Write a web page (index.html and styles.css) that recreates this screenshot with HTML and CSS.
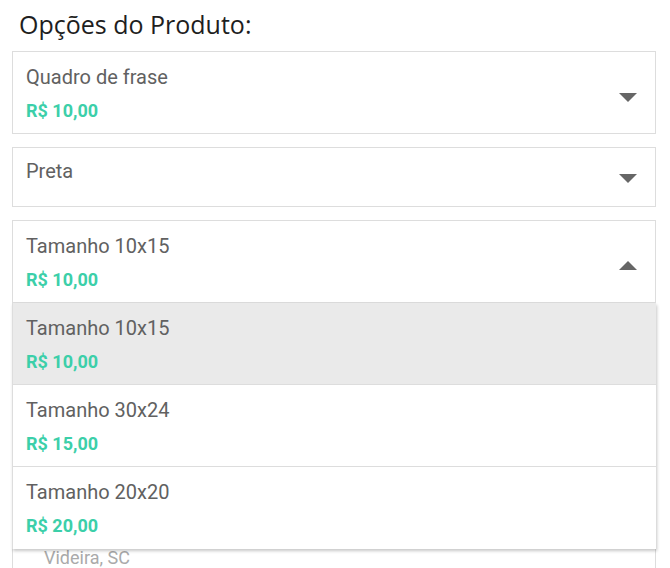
FILE: index.html
```html
<!doctype html>
<html>

<head>
    <meta charset="UTF-8">
    <title>Opções do Produto</title>
    <link rel="stylesheet" href="styles.css">
</head>

<body>
    <div class="options">
        <h2 class="options-title">Opções do Produto:</h2>

        <div class="select">
            <div class="select-text">
                <div class="opt-name">Quadro de frase</div>
                <div class="opt-price">R$ 10,00</div>
            </div>
            <span class="caret"></span>
        </div>

        <div class="select select-single">
            <div class="select-text">
                <div class="opt-name">Preta</div>
            </div>
            <span class="caret"></span>
        </div>

        <div class="select-wrap">
            <div class="select">
                <div class="select-text">
                    <div class="opt-name">Tamanho 10x15</div>
                    <div class="opt-price">R$ 10,00</div>
                </div>
                <span class="caret caret-up"></span>
            </div>

            <ul class="dropdown">
                <li class="active">
                    <div class="opt-name">Tamanho 10x15</div>
                    <div class="opt-price">R$ 10,00</div>
                </li>
                <li>
                    <div class="opt-name">Tamanho 30x24</div>
                    <div class="opt-price">R$ 15,00</div>
                </li>
                <li>
                    <div class="opt-name">Tamanho 20x20</div>
                    <div class="opt-price">R$ 20,00</div>
                </li>
            </ul>
        </div>

        <div class="shipping">
            <div class="shipping-city">Videira, SC</div>
        </div>
    </div>
</body>

</html>
```

FILE: styles.css
```css
* {
    margin: 0;
    padding: 0;
    list-style: none;
    box-sizing: border-box;
}

body {
    overflow: hidden;
    background: #fff;
    font-family: Roboto, "Liberation Sans", sans-serif;
}

.options {
    width: 644px;
    margin-left: 12px;
}

.options-title {
    font-family: "Open Sans", "Liberation Sans", sans-serif;
    font-weight: normal;
    font-size: 25px;
    line-height: 32px;
    color: #1e1e1e;
    padding: 8px 0 0 7px;
    margin-bottom: 11px;
}

.select {
    display: flex;
    align-items: center;
    border: 1px solid #ddd;
    background: #fff;
    padding: 13px 18px 10px 13px;
    margin-bottom: 13px;
}

.select-single {
    padding-top: 11px;
    padding-bottom: 23px;
}

.select-text {
    flex: 1;
}

.opt-name {
    font-size: 20px;
    line-height: 24px;
    color: #616161;
}

.opt-price {
    font-size: 18px;
    line-height: 24px;
    font-weight: bold;
    color: #3ccfa9;
    margin-top: 10px;
}

.caret {
    width: 0;
    height: 0;
    border-left: 9px solid transparent;
    border-right: 9px solid transparent;
    border-top: 9px solid #666;
    margin-top: 7px;
}

.select-single .caret {
    margin-top: 14px;
}

.caret-up {
    border-top: 0;
    border-bottom: 9px solid #666;
    margin-top: 4px;
}

.select-wrap {
    position: relative;
}

.select-wrap .select {
    margin-bottom: 0;
}

.dropdown {
    position: absolute;
    left: 0;
    top: 100%;
    width: 100%;
    z-index: 2;
    background: #fff;
    border-left: 1px solid #ddd;
    box-shadow: 1px 2px 3px rgba(0, 0, 0, .22);
}

.dropdown li {
    padding: 13px 13px 9px;
    border-bottom: 1px solid #ddd;
    height: 82px;
}

.dropdown li:last-child {
    border-bottom: 0;
}

.dropdown li.active {
    background: #eaeaea;
}

.shipping {
    margin-top: 13px;
    border: 1px solid #ddd;
    height: 300px;
    padding: 229px 13px 0 31px;
}

.shipping-city {
    font-size: 18px;
    line-height: 24px;
    color: #aaa;
}
```
